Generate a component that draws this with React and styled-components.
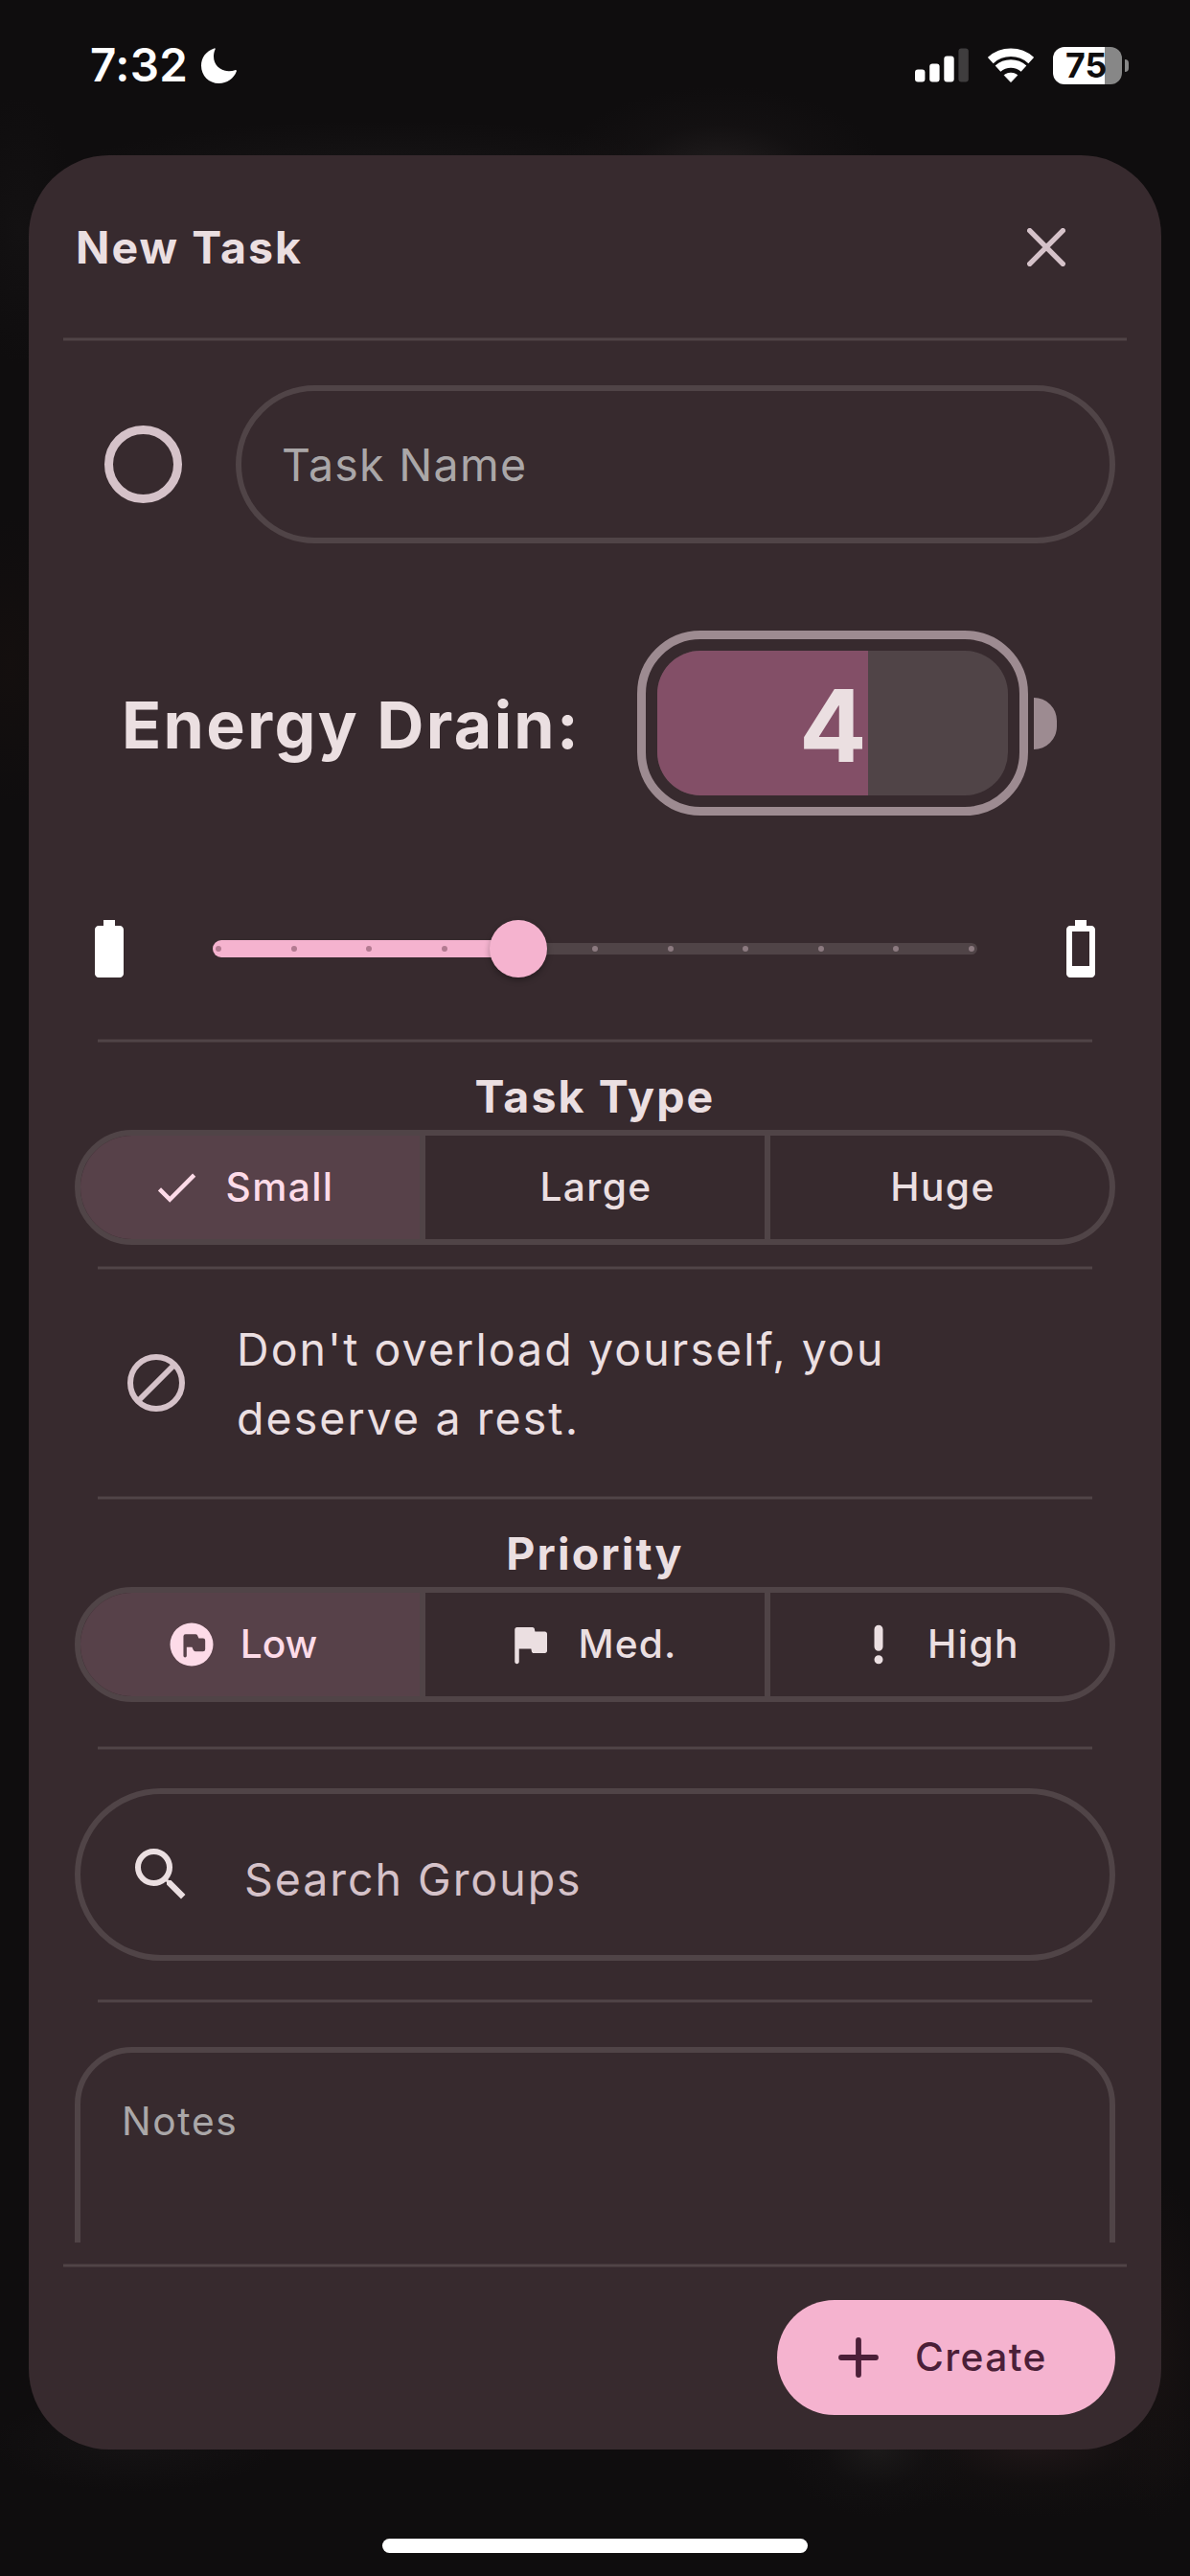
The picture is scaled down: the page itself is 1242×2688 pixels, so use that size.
import React from 'react';
import styled, { createGlobalStyle } from 'styled-components';

const color = {
  screen: '#0f0d0e',
  surface: '#372a2e',
  outline: '#504447',
  outlineSoft: '#433639',
  text: '#ebdfe1',
  muted: '#d5c2c9',
  placeholder: '#aaa7a8',
  primary: '#f5b3cf',
  onPrimary: '#4b1f38',
  selected: '#574149',
  onSelected: '#fddbe8',
};

const GlobalStyle = createGlobalStyle`
  * { box-sizing: border-box; }
  body {
    margin: 0;
    background: ${color.screen};
    font-family: Inter, "Liberation Sans", sans-serif;
  }
  svg { display: block; flex: none; }
`;

const Screen = styled.div`
  width: 1242px;
  height: 2688px;
  display: flex;
  flex-direction: column;
  align-items: center;
  overflow: hidden;
  background:
    radial-gradient(ellipse 170px 90px at 752px 180px, #221e1f, #17141580 55%, transparent),
    radial-gradient(ellipse 320px 50px at 400px 176px, #161415, transparent),
    radial-gradient(ellipse 60px 150px at 10px 690px, #140f0e, transparent),
    radial-gradient(ellipse 60px 140px at 20px 240px, #131112, transparent),
    radial-gradient(ellipse 100px 70px at 915px 2556px, #1c1a1a, #14121380 55%, transparent),
    radial-gradient(ellipse 190px 75px at 1080px 2552px, #1f1718, #15111180 55%, transparent),
    radial-gradient(ellipse 60px 180px at 1205px 2450px, #181212, transparent),
    radial-gradient(ellipse 150px 50px at 140px 2550px, #151314, transparent),
    ${color.screen};
`;

const StatusBar = styled.header`
  width: 100%;
  height: 162px;
  padding: 0 64px 26px 94px;
  display: flex;
  align-items: center;
  color: #fff;
`;

const Clock = styled.div`
  font-size: 47.5px;
  line-height: 58px;
  font-weight: 600;
  letter-spacing: 0.36px;
  margin-right: 14px;
`;

const StatusIcons = styled.div`
  margin-left: auto;
  display: flex;
  align-items: center;
  gap: 20px;
`;

const StatusBattery = styled.div`
  display: flex;
  align-items: center;
  gap: 3px;
`;

const StatusBatteryBody = styled.div`
  width: 72px;
  height: 39px;
  padding-left: 13px;
  border-radius: 12px;
  display: flex;
  align-items: center;
  background: linear-gradient(90deg, #fff 75%, #878787 75%);
  color: ${color.screen};
  font-size: 35.7px;
  line-height: 39px;
  font-weight: 700;
`;

const StatusBatteryTip = styled.div`
  width: 4px;
  height: 13px;
  border-radius: 0 4px 4px 0;
  background: #878787;
`;

const Card = styled.main`
  width: 1182px;
  height: 2394px;
  display: flex;
  flex-direction: column;
  border-radius: 84px;
  background: ${color.surface};
  color: ${color.text};
`;

const CardHeader = styled.div`
  height: 190px;
  padding: 2px 100px 0 49px;
  display: flex;
  align-items: center;
  justify-content: space-between;
`;

const Title = styled.h1`
  margin: 0;
  font-size: 46.5px;
  line-height: 58px;
  font-weight: 700;
  letter-spacing: 2.04px;
`;

const Divider = styled.div`
  flex: none;
  height: 4px;
  margin: ${(p) => p.$top || 0}px ${(p) => p.$inset}px 0;
  background: ${color.outline};
  border: solid ${color.outlineSoft};
  border-width: 1px 0;
`;

const Form = styled.div`
  height: 1984px;
  padding: 46px 48px 0;
  overflow: hidden;
  display: flex;
  flex-direction: column;
  & > * { flex-shrink: 0; }
`;

const NameRow = styled.div`
  height: 165px;
  padding-left: 31px;
  display: flex;
  align-items: center;
  gap: 56px;
`;

const StatusRing = styled.div`
  width: 81px;
  height: 81px;
  border: 9px solid ${color.muted};
  border-radius: 50%;
`;

const NameField = styled.div`
  flex: 1;
  height: 165px;
  padding-left: 42px;
  display: flex;
  align-items: center;
  border: 6px solid ${color.outline};
  border-radius: 83px;
  color: ${color.placeholder};
  font-size: 46.5px;
  letter-spacing: 1.28px;
`;

const EnergyRow = styled.div`
  height: 193px;
  margin-top: 91px;
  padding: 0 61px 0 49px;
  display: flex;
  align-items: center;
  justify-content: space-between;
`;

const EnergyLabel = styled.div`
  padding-top: 2px;
  font-size: 68px;
  line-height: 82px;
  font-weight: 700;
  letter-spacing: 2.31px;
`;

const Battery = styled.div`
  display: flex;
  align-items: center;
  gap: 6px;
`;

const BatteryShell = styled.div`
  width: 408px;
  height: 193px;
  padding: 12px;
  border: 9px solid #9d8b91;
  border-radius: 66px;
`;

const BatteryTrack = styled.div`
  height: 151px;
  border-radius: 45px;
  overflow: hidden;
  background: ${color.outline};
`;

const BatteryFill = styled.div`
  height: 100%;
  padding: 5px 1px 0 0;
  display: flex;
  align-items: center;
  justify-content: flex-end;
  background: #834f67;
  font-size: 104.5px;
  line-height: 120px;
  font-weight: 700;
`;

const BatteryTip = styled.div`
  width: 24px;
  height: 54px;
  border-radius: 0 24px 24px 0;
  background: #9d8b91;
`;

const SliderRow = styled.div`
  height: 72px;
  margin-top: 103px;
  display: flex;
  align-items: center;
  gap: 72px;
`;

const SliderTrack = styled.div`
  position: relative;
  flex: 1;
  height: 12px;
  border-radius: 6px;
  background: ${color.outline};
`;

const SliderActive = styled.div`
  position: absolute;
  top: -3px;
  left: 0;
  height: 18px;
  border-radius: 9px;
  background: ${color.primary};
`;

const Tick = styled.div`
  position: absolute;
  top: 3px;
  width: 6px;
  height: 6px;
  border-radius: 50%;
  background: ${(p) => (p.$active ? '#b37a91' : '#8c7a80')};
`;

const Thumb = styled.div`
  position: absolute;
  top: -24px;
  width: 60px;
  height: 60px;
  margin-left: -30px;
  border-radius: 50%;
  background: ${color.primary};
  box-shadow: 0 3px 6px rgba(0, 0, 0, 0.3);
`;

const SectionTitle = styled.h2`
  margin: 27px 0 6px;
  font-size: 46.5px;
  line-height: 58px;
  font-weight: 700;
  letter-spacing: 2.12px;
  text-align: center;
`;

const Segments = styled.div`
  height: 120px;
  display: flex;
  border: 6px solid ${color.outline};
  border-radius: 60px;
  overflow: hidden;
`;

const Segment = styled.div`
  flex: 1;
  display: flex;
  align-items: center;
  justify-content: center;
  background: ${(p) => (p.$selected ? color.selected : 'transparent')};
  color: ${(p) => (p.$selected ? color.onSelected : color.text)};
  & + & {
    margin-left: 6px;
    box-shadow: -6px 0 0 ${color.outline};
  }
`;

const SegmentContent = styled.div`
  display: flex;
  align-items: center;
  gap: 24px;
  margin-left: ${(p) => (p.$shift || 0) * 2}px;
  font-size: 40.7px;
  line-height: 54px;
  font-weight: 500;
  letter-spacing: ${(p) => (p.$tracking === undefined ? 1.4 : p.$tracking)}px;
`;

const Notice = styled.div`
  height: 236px;
  padding-left: 55px;
  display: flex;
  align-items: center;
  gap: 54px;
`;

const NoticeText = styled.p`
  margin: 2px 0 0;
  width: 720px;
  font-size: 46.5px;
  line-height: 72px;
  letter-spacing: 2.07px;
`;

const SearchField = styled.div`
  height: 180px;
  margin-top: 40px;
  padding-left: 48px;
  display: flex;
  align-items: center;
  gap: 51px;
  border: 6px solid ${color.outline};
  border-radius: 90px;
`;

const SearchText = styled.div`
  padding-top: 10px;
  color: ${color.muted};
  font-size: 46.5px;
  line-height: 58px;
  letter-spacing: 1.95px;
`;

const NotesField = styled.div`
  height: 360px;
  margin-top: 46px;
  padding: 46px 43px;
  border: 6px solid ${color.outline};
  border-radius: 60px;
  color: ${color.placeholder};
  font-size: 40.7px;
  line-height: 52px;
  letter-spacing: 1.65px;
`;

const Footer = styled.div`
  padding: 34px 48px 36px;
  display: flex;
  justify-content: flex-end;
`;

const CreateButton = styled.button`
  width: 353px;
  height: 120px;
  padding: 0 0 0 58px;
  border: 0;
  border-radius: 60px;
  display: flex;
  align-items: center;
  gap: 32px;
  background: ${color.primary};
  color: ${color.onPrimary};
  font: 500 40.7px/54px Inter, "Liberation Sans", sans-serif;
  letter-spacing: 1.37px;
`;

const HomeIndicator = styled.div`
  width: 444px;
  height: 15px;
  margin-top: 93px;
  border-radius: 8px;
  background: #fff;
`;

const Glyph = ({ size, d, fill = 'currentColor' }) => (
  <svg width={size} height={size} viewBox="0 0 24 24">
    <path d={d} fill={fill} fillRule="evenodd" />
  </svg>
);

const paths = {
  check: 'M21 7 9 19l-5.5-5.5 1.41-1.41L9 16.17 19.59 5.59z',
  flag: 'M14.4 6l-.24-1.2c-.09-.46-.5-.8-.98-.8H6c-.55 0-1 .45-1 1v15c0 .55.45 1 1 1s1-.45 1-1v-6h5.6l.24 1.2c.09.47.5.8.98.8H19c.55 0 1-.45 1-1V7c0-.55-.45-1-1-1h-4.6z',
  flagCircle:
    'M12 2a10 10 0 1 0 0 20 10 10 0 0 0 0-20zM17.3 15.2H13.700a1 1 0 0 1-.9-.6l-.6-1.400H9.700v4a.75.75 0 0 1-1.500 0V8.200a1 1 0 0 1 1-1h4.600a1 1 0 0 1 .9.6l.6 1.300h2a1 1 0 0 1 1 1v4.100a1 1 0 0 1-1 1z',
  exclaim:
    'M12 3c-1.1 0-2 .9-2 2v8c0 1.1.9 2 2 2s2-.9 2-2V5c0-1.1-.9-2-2-2zM12 17a2 2 0 1 0 0 4 2 2 0 0 0 0-4z',
  search:
    'M15.5 14h-.79l-.28-.27A6.471 6.471 0 0 0 16 9.5 6.5 6.5 0 1 0 9.5 16c1.61 0 3.09-.59 4.23-1.57l.27.28v.79l5 4.99L20.49 19l-4.99-5zm-6 0C7.01 14 5 11.99 5 9.5S7.01 5 9.5 5 14 7.01 14 9.5 11.99 14 9.5 14z',
  batteryFull:
    'M17 5.33C17 4.6 16.4 4 15.67 4H14V2h-4v2H8.33C7.6 4 7 4.6 7 5.33v15.33C7 21.4 7.6 22 8.33 22h7.33c.74 0 1.34-.6 1.34-1.33V5.33z',
  batteryLow:
    'M17 5.33C17 4.6 16.4 4 15.67 4H14V2h-4v2H8.33C7.6 4 7 4.6 7 5.33v15.33C7 21.4 7.6 22 8.33 22h7.33c.74 0 1.34-.6 1.34-1.33V5.33zM9 6h6v12H9z',
};

const Moon = () => (
  <svg width="37" height="37" viewBox="0 0 37 37">
    <path
      fill="#fff"
      d="M13.6.4C5.2 3 0 10 0 18.5 0 29 8 37 18.5 37c8.5 0 15.5-5 18.3-12.5.4-1.1-.4-1.6-1.5-1.3-2.2.8-4.5 1.1-6.9 1C19 23.7 13 17.5 13 8.8c0-2.5.6-5 1.5-7 .5-1 .1-1.7-.9-1.4z"
    />
  </svg>
);

const Signal = () => (
  <svg width="56" height="36" viewBox="0 0 56 36">
    <g fill="#fff">
      <rect x="0" y="22.5" width="10.4" height="13" rx="3" />
      <rect x="15.2" y="16.5" width="10.4" height="19" rx="3" />
      <rect x="30.3" y="8.5" width="10.4" height="27" rx="3" />
      <rect x="45.4" y="0.5" width="10.4" height="35" rx="3" fill="#3f3d3e" />
    </g>
  </svg>
);

const Wifi = () => (
  <svg width="48" height="37" viewBox="0 0 48 37">
    <g fill="none" stroke="#fff" strokeWidth="8.5">
      <path d="M2.8 13A31.7 31.7 0 0 1 45.2 13" />
      <path d="M10.5 21.6A20.2 20.2 0 0 1 37.5 21.6" />
    </g>
    <path
      d="M17.2 28.4A11.5 11.5 0 0 1 30.8 28.4L24 35.6z"
      fill="#fff"
      stroke="#fff"
      strokeWidth="1"
      strokeLinejoin="round"
    />
  </svg>
);

const Close = () => (
  <svg width="40" height="40" viewBox="0 0 40 40">
    <path
      d="M2.7 2.7 37.3 37.3M37.3 2.7 2.7 37.3"
      stroke={color.muted}
      strokeWidth="5.4"
      strokeLinecap="round"
    />
  </svg>
);

const Ban = () => (
  <svg width="60" height="60" viewBox="0 0 60 60">
    <g fill="none" stroke={color.muted} strokeWidth="6">
      <circle cx="30" cy="30" r="27" />
      <path d="M11 49 49 11" />
    </g>
  </svg>
);

const Plus = () => (
  <svg width="54" height="54" viewBox="0 0 54 54">
    <path d="M27 9v36M9 27h36" stroke={color.onPrimary} strokeWidth="5.8" strokeLinecap="round" />
  </svg>
);

const STEPS = 11;
const VALUE = 4;
const stepLeft = (i) => 6 + i * 78.6;

export default function App() {
  return (
    <>
      <GlobalStyle />
      <Screen>
        <StatusBar>
          <Clock>7:32</Clock>
          <Moon />
          <StatusIcons>
            <Signal />
            <Wifi />
            <StatusBattery>
              <StatusBatteryBody>75</StatusBatteryBody>
              <StatusBatteryTip />
            </StatusBattery>
          </StatusIcons>
        </StatusBar>

        <Card>
          <CardHeader>
            <Title>New Task</Title>
            <Close />
          </CardHeader>
          <Divider $inset={36} />

          <Form>
            <NameRow>
              <StatusRing />
              <NameField>Task Name</NameField>
            </NameRow>

            <EnergyRow>
              <EnergyLabel>Energy Drain:</EnergyLabel>
              <Battery>
                <BatteryShell>
                  <BatteryTrack>
                    <BatteryFill style={{ width: `${(10 - VALUE) * 10}%` }}>{VALUE}</BatteryFill>
                  </BatteryTrack>
                </BatteryShell>
                <BatteryTip />
              </Battery>
            </EnergyRow>

            <SliderRow>
              <Glyph size={72} d={paths.batteryFull} fill="#fff" />
              <SliderTrack>
                <SliderActive style={{ width: stepLeft(VALUE) }} />
                {Array.from({ length: STEPS }, (_, i) => (
                  <Tick key={i} $active={i < VALUE} style={{ left: stepLeft(i) - 3 }} />
                ))}
                <Thumb style={{ left: stepLeft(VALUE) - 1 }} />
              </SliderTrack>
              <Glyph size={72} d={paths.batteryLow} fill="#fff" />
            </SliderRow>

            <Divider $inset={24} $top={58} />
            <SectionTitle>Task Type</SectionTitle>
            <Segments>
              <Segment $selected>
                <SegmentContent $shift={-8}>
                  <Glyph size={54} d={paths.check} />
                  Small
                </SegmentContent>
              </Segment>
              <Segment>
                <SegmentContent $shift={1}>Large</SegmentContent>
              </Segment>
              <Segment>
                <SegmentContent $shift={3}>Huge</SegmentContent>
              </Segment>
            </Segments>

            <Divider $inset={24} $top={22} />
            <Notice>
              <Ban />
              <NoticeText>Don't overload yourself, you deserve a rest.</NoticeText>
            </Notice>

            <Divider $inset={24} />
            <SectionTitle>Priority</SectionTitle>
            <Segments>
              <Segment $selected>
                <SegmentContent $shift={-9} $tracking={0}>
                  <Glyph size={54} d={paths.flagCircle} />
                  Low
                </SegmentContent>
              </Segment>
              <Segment>
                <SegmentContent $shift={-5} $tracking={1.1}>
                  <Glyph size={54} d={paths.flag} />
                  Med.
                </SegmentContent>
              </Segment>
              <Segment>
                <SegmentContent $shift={-4}>
                  <Glyph size={54} d={paths.exclaim} />
                  High
                </SegmentContent>
              </Segment>
            </Segments>

            <Divider $inset={24} $top={46} />
            <SearchField>
              <Glyph size={72} d={paths.search} />
              <SearchText>Search Groups</SearchText>
            </SearchField>

            <Divider $inset={24} $top={40} />
            <NotesField>Notes</NotesField>
          </Form>

          <Divider $inset={36} $top={22} />
          <Footer>
            <CreateButton>
              <Plus />
              Create
            </CreateButton>
          </Footer>
        </Card>
        <HomeIndicator />
      </Screen>
    </>
  );
}
